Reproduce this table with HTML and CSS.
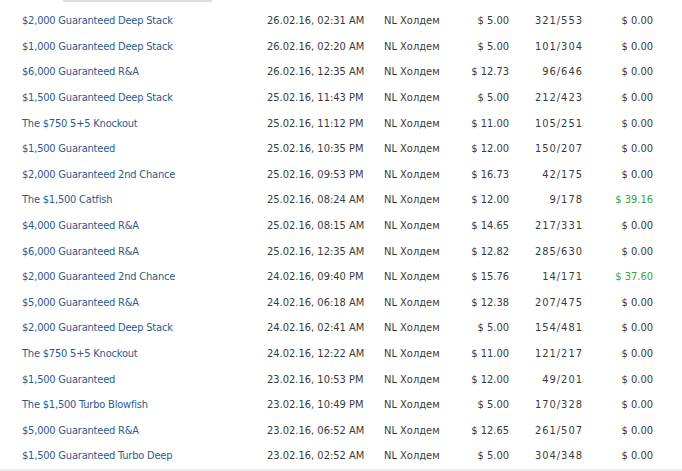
FILE: index.html
```html
<!DOCTYPE html>
<html>
<head>
<meta charset="utf-8">
<link rel="stylesheet" href="styles.css">
</head>
<body>
<div class="topbar"></div>
<div class="list">
  <div class="row"><a class="name">$2,000 Guaranteed Deep Stack</a><span class="date">26.02.16, 02:31 AM</span><span class="game">NL Холдем</span><span class="num">$ 5.00</span><span class="num entries">321/553</span><span class="num">$ 0.00</span></div>
  <div class="row"><a class="name">$1,000 Guaranteed Deep Stack</a><span class="date">26.02.16, 02:20 AM</span><span class="game">NL Холдем</span><span class="num">$ 5.00</span><span class="num entries">101/304</span><span class="num">$ 0.00</span></div>
  <div class="row"><a class="name">$6,000 Guaranteed R&amp;A</a><span class="date">26.02.16, 12:35 AM</span><span class="game">NL Холдем</span><span class="num">$ 12.73</span><span class="num entries">96/646</span><span class="num">$ 0.00</span></div>
  <div class="row"><a class="name">$1,500 Guaranteed Deep Stack</a><span class="date">25.02.16, 11:43 PM</span><span class="game">NL Холдем</span><span class="num">$ 5.00</span><span class="num entries">212/423</span><span class="num">$ 0.00</span></div>
  <div class="row"><a class="name">The $750 5+5 Knockout</a><span class="date">25.02.16, 11:12 PM</span><span class="game">NL Холдем</span><span class="num">$ 11.00</span><span class="num entries">105/251</span><span class="num">$ 0.00</span></div>
  <div class="row"><a class="name">$1,500 Guaranteed</a><span class="date">25.02.16, 10:35 PM</span><span class="game">NL Холдем</span><span class="num">$ 12.00</span><span class="num entries">150/207</span><span class="num">$ 0.00</span></div>
  <div class="row"><a class="name">$2,000 Guaranteed 2nd Chance</a><span class="date">25.02.16, 09:53 PM</span><span class="game">NL Холдем</span><span class="num">$ 16.73</span><span class="num entries">42/175</span><span class="num">$ 0.00</span></div>
  <div class="row"><a class="name">The $1,500 Catfish</a><span class="date">25.02.16, 08:24 AM</span><span class="game">NL Холдем</span><span class="num">$ 12.00</span><span class="num entries">9/178</span><span class="num win">$ 39.16</span></div>
  <div class="row"><a class="name">$4,000 Guaranteed R&amp;A</a><span class="date">25.02.16, 08:15 AM</span><span class="game">NL Холдем</span><span class="num">$ 14.65</span><span class="num entries">217/331</span><span class="num">$ 0.00</span></div>
  <div class="row"><a class="name">$6,000 Guaranteed R&amp;A</a><span class="date">25.02.16, 12:35 AM</span><span class="game">NL Холдем</span><span class="num">$ 12.82</span><span class="num entries">285/630</span><span class="num">$ 0.00</span></div>
  <div class="row"><a class="name">$2,000 Guaranteed 2nd Chance</a><span class="date">24.02.16, 09:40 PM</span><span class="game">NL Холдем</span><span class="num">$ 15.76</span><span class="num entries">14/171</span><span class="num win">$ 37.60</span></div>
  <div class="row"><a class="name">$5,000 Guaranteed R&amp;A</a><span class="date">24.02.16, 06:18 AM</span><span class="game">NL Холдем</span><span class="num">$ 12.38</span><span class="num entries">207/475</span><span class="num">$ 0.00</span></div>
  <div class="row"><a class="name">$2,000 Guaranteed Deep Stack</a><span class="date">24.02.16, 02:41 AM</span><span class="game">NL Холдем</span><span class="num">$ 5.00</span><span class="num entries">154/481</span><span class="num">$ 0.00</span></div>
  <div class="row"><a class="name">The $750 5+5 Knockout</a><span class="date">24.02.16, 12:22 AM</span><span class="game">NL Холдем</span><span class="num">$ 11.00</span><span class="num entries">121/217</span><span class="num">$ 0.00</span></div>
  <div class="row"><a class="name">$1,500 Guaranteed</a><span class="date">23.02.16, 10:53 PM</span><span class="game">NL Холдем</span><span class="num">$ 12.00</span><span class="num entries">49/201</span><span class="num">$ 0.00</span></div>
  <div class="row"><a class="name">The $1,500 Turbo Blowfish</a><span class="date">23.02.16, 10:49 PM</span><span class="game">NL Холдем</span><span class="num">$ 5.00</span><span class="num entries">170/328</span><span class="num">$ 0.00</span></div>
  <div class="row"><a class="name">$5,000 Guaranteed R&amp;A</a><span class="date">23.02.16, 06:52 AM</span><span class="game">NL Холдем</span><span class="num">$ 12.65</span><span class="num entries">261/507</span><span class="num">$ 0.00</span></div>
  <div class="row"><a class="name">$1,500 Guaranteed Turbo Deep</a><span class="date">23.02.16, 02:52 AM</span><span class="game">NL Холдем</span><span class="num">$ 5.00</span><span class="num entries">304/348</span><span class="num">$ 0.00</span></div>
</div>
</body>
</html>
```
FILE: styles.css
```css
html, body {
  margin: 0;
  padding: 0;
  background: #fff;
}
body {
  font-family: "DejaVu Sans Condensed", "Liberation Sans", sans-serif;
  font-size: 11px;
  color: #3a3a3a;
  width: 682px;
  height: 471px;
  overflow: hidden;
}
.topbar {
  margin-left: 63px;
  width: 149px;
  height: 2px;
  background: #dcdcdc;
}
.list {
  margin-top: 6px;
  border-bottom: 2px solid #ececec;
}
.row {
  display: grid;
  grid-template-columns: 245px 117px 70px 55px 73px 71px;
  padding-left: 22px;
  height: 25.6px;
  align-items: center;
  white-space: nowrap;
}
.name {
  color: #2c5a8c;
  text-decoration: none;
  letter-spacing: -0.2px;
}
.num {
  text-align: right;
}
.entries {
  letter-spacing: 1px;
  margin-right: -1px;
}
.win {
  color: #3aa23a;
}
```
